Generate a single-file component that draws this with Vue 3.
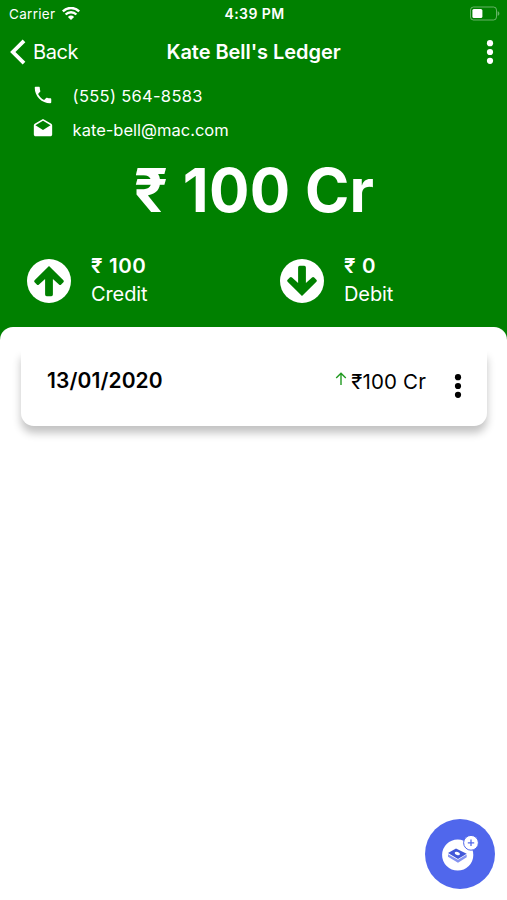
<script setup>
    import { reactive } from 'vue';

    const state = reactive({
        title: "Kate Bell's Ledger",
        phone: '(555) 564-8583',
        email: 'kate-bell@mac.com',
        balance: '₹ 100 Cr',
        credit: '₹ 100',
        debit: '₹ 0',
        entries: [
            {id: 1, date: '13/01/2020', amount: '₹100 Cr'}
        ]
    });
</script>

<template>
    <div class="main">
        <div class="status">
            <div class="carrier">
                <span>Carrier</span>
                <svg width="18" height="14" viewBox="0 0 18 14">
                    <path d="M0.8 4.3a11.8 11.8 0 0 1 16.4 0" />
                    <path d="M3.6 7.5a7.7 7.7 0 0 1 10.8 0" />
                    <path class="solid" d="M9 13.1L5.9 9.9a4.7 4.7 0 0 1 6.2 0z" />
                </svg>
            </div>
            <div class="clock">4:39 PM</div>
            <div class="battery">
                <svg width="31" height="15" viewBox="0 0 31 15">
                    <rect class="shell" x="1.5" y="1" width="26" height="13" rx="3" />
                    <rect class="level" x="3.4" y="3" width="10" height="9" rx="1.5" />
                    <path class="cap" d="M28.6 5.2c2.4 0.7 2.4 3.9 0 4.6z" />
                </svg>
            </div>
        </div>

        <div class="nav">
            <button type="button" class="back">
                <svg width="16" height="26" viewBox="0 0 16 26">
                    <path d="M14 1.8L2.8 13L14 24.2" />
                </svg>
                <span>Back</span>
            </button>
            <h1>{{ state.title }}</h1>
            <button type="button" class="more">
                <svg width="8" height="26" viewBox="0 0 8 26">
                    <circle cx="4" cy="4.2" r="3.1" />
                    <circle cx="4" cy="13" r="3.1" />
                    <circle cx="4" cy="21.8" r="3.1" />
                </svg>
            </button>
        </div>

        <div class="contacts">
            <div class="contact">
                <svg width="22" height="22" viewBox="0 0 24 24">
                    <path d="M6.62 10.79c1.44 2.83 3.76 5.14 6.59 6.59l2.2-2.2c.27-.27.67-.36 1.02-.24 1.12.37 2.33.57 3.57.57.55 0 1 .45 1 1V20c0 .55-.45 1-1 1-9.39 0-17-7.61-17-17 0-.55.45-1 1-1h3.5c.55 0 1 .45 1 1 0 1.25.2 2.45.57 3.57.11.35.03.74-.25 1.02l-2.2 2.2z" />
                </svg>
                <span class="phone">{{ state.phone }}</span>
            </div>
            <div class="contact">
                <svg width="22" height="22" viewBox="0 0 24 24">
                    <path d="M21.99 8c0-.72-.37-1.35-.94-1.7L12 1 2.95 6.3C2.38 6.65 2 7.28 2 8v10c0 1.1.9 2 2 2h16c1.1 0 2-.9 2-2l-.01-10zM12 13L3.74 7.84 12 3l8.26 4.84L12 13z" />
                </svg>
                <span class="email">{{ state.email }}</span>
            </div>
        </div>

        <div class="balance"><span>{{ state.balance }}</span></div>

        <div class="totals">
            <div class="total">
                <svg width="44" height="44" viewBox="0 0 44 44">
                    <circle cx="22" cy="22" r="22" />
                    <path d="M22 7L36.4 21.2a1.4 1.4 0 0 1 0 2L34.2 25.6a1.6 1.6 0 0 1-2.2 0L25.9 20V35.6a1.6 1.6 0 0 1-1.6 1.6h-4.6A1.6 1.6 0 0 1 18.1 35.6V20L12 25.6a1.6 1.6 0 0 1-2.2 0L7.6 23.2a1.4 1.4 0 0 1 0-2z" />
                </svg>
                <div class="figures">
                    <strong>{{ state.credit }}</strong>
                    <span>Credit</span>
                </div>
            </div>
            <div class="total">
                <svg width="44" height="44" viewBox="0 0 44 44">
                    <circle cx="22" cy="22" r="22" />
                    <path transform="rotate(180 22 22)" d="M22 7L36.4 21.2a1.4 1.4 0 0 1 0 2L34.2 25.6a1.6 1.6 0 0 1-2.2 0L25.9 20V35.6a1.6 1.6 0 0 1-1.6 1.6h-4.6A1.6 1.6 0 0 1 18.1 35.6V20L12 25.6a1.6 1.6 0 0 1-2.2 0L7.6 23.2a1.4 1.4 0 0 1 0-2z" />
                </svg>
                <div class="figures">
                    <strong>{{ state.debit }}</strong>
                    <span>Debit</span>
                </div>
            </div>
        </div>

        <div class="sheet">
            <div class="list">
                <div class="entry" v-for="entry in state.entries" :key="entry.id">
                    <span class="date">{{ entry.date }}</span>
                    <svg class="arrow" width="12" height="14" viewBox="0 0 12 14">
                        <path d="M6 13V1.5M1.2 6L6 1.3L10.8 6" />
                    </svg>
                    <span class="amount">{{ entry.amount }}</span>
                    <svg class="dots" width="8" height="26" viewBox="0 0 8 26">
                        <circle cx="4" cy="4.2" r="3.1" />
                        <circle cx="4" cy="13" r="3.1" />
                        <circle cx="4" cy="21.8" r="3.1" />
                    </svg>
                </div>
            </div>
        </div>

        <button type="button" class="add">
            <svg width="70" height="70" viewBox="0 0 70 70">
                <circle class="paper" cx="32.7" cy="36" r="15.6" />
                <circle class="badge" cx="46" cy="23.8" r="7.4" />
                <path class="plus" d="M46 20.6v6.4M42.8 23.8h6.4" />
                <path class="stack" d="M23 35.2v2.6l10 6 8.7-5.6v-2.8l-8.7 5.4z" />
                <path class="note" d="M23 33.9l8-4.3 10.7 5.1-8.7 5.4z" />
                <ellipse class="coin" cx="32.3" cy="34.5" rx="2.7" ry="1.6" transform="rotate(15 32.3 34.5)" />
            </svg>
        </button>
    </div>
</template>

<style>
    body{
        background: #FFFFFF;
    }
</style>

<style scoped>
    div.main{
        position: relative;
        box-sizing: border-box;
        width: 100%;
        height: 900px;
        overflow: hidden;
        background: #008000;
        color: #FFFFFF;
        font-family: Inter, "Liberation Sans", sans-serif;

        display: flex;
        flex-direction: column;
    }
    svg{
        display: block;
        flex: none;
    }
    button{
        padding: 0;
        border: none;
        background: none;
        color: inherit;
        font-family: inherit;
    }
    div.status{
        height: 27px;
        padding: 0 7px 0 9px;
        font-size: 13.5px;

        display: grid;
        grid-template-columns: 1fr auto 1fr;
        align-items: center;
    }
    div.carrier{
        display: flex;
        align-items: center;
        gap: 7px;
    }
    div.carrier span{
        letter-spacing: 0.3px;
    }
    div.carrier path{
        fill: none;
        stroke: #FFFFFF;
        stroke-width: 2.4;
    }
    div.carrier path.solid{
        fill: #FFFFFF;
        stroke: none;
    }
    div.clock{
        font-size: 14px;
        font-weight: 600;
        letter-spacing: 0.4px;
    }
    div.battery{
        justify-self: end;
    }
    div.battery rect.shell{
        fill: none;
        stroke: #FFFFFF;
        stroke-opacity: 0.4;
    }
    div.battery rect.level{
        fill: #FFFFFF;
    }
    div.battery path.cap{
        fill: #FFFFFF;
        fill-opacity: 0.4;
    }
    div.nav{
        height: 50px;
        padding: 0 10px;

        display: grid;
        grid-template-columns: 1fr auto 1fr;
        align-items: center;
    }
    button.back{
        display: flex;
        align-items: center;
        gap: 7px;
        font-size: 20px;
        letter-spacing: -0.4px;
    }
    button.back path{
        fill: none;
        stroke: #FFFFFF;
        stroke-width: 3.8;
    }
    h1{
        margin: 0;
        font-size: 20px;
        font-weight: 600;
        letter-spacing: -0.05px;
    }
    button.more{
        justify-self: end;
        margin-right: 3px;
        fill: #FFFFFF;
    }
    div.contacts{
        padding: 2px 32px 0;
    }
    div.contact{
        height: 34px;
        font-size: 16.5px;

        display: flex;
        align-items: center;
        gap: 18.6px;
    }
    div.contact svg{
        margin-bottom: 2px;
        fill: #FFFFFF;
    }
    span.phone{
        letter-spacing: 0.3px;
    }
    div.balance{
        height: 86px;
        padding-left: 1px;
        font-size: 60px;
        font-weight: 700;
        line-height: 87px;
        letter-spacing: 0.3px;
        text-align: center;
    }
    div.totals{
        height: 94px;
        padding: 20px 0 0 27px;
        box-sizing: border-box;

        display: grid;
        grid-template-columns: 253px 1fr;
    }
    div.total{
        height: 56px;
        display: flex;
        align-items: center;
        gap: 20px;
    }
    div.total circle{
        fill: #FFFFFF;
    }
    div.total path{
        fill: #008000;
    }
    div.figures{
        margin-bottom: 2px;
        display: flex;
        flex-direction: column;
        font-size: 20px;
        line-height: 28px;
        letter-spacing: -0.1px;
    }
    div.figures strong{
        font-size: 20.5px;
        font-weight: 600;
        letter-spacing: 0.6px;
    }
    div.sheet{
        flex: 1;
        padding: 24px 0 0;
        border-radius: 13px 13px 0 0;
        background: #FFFFFF;
        color: #000000;
    }
    div.list{
        padding: 0 20px 20px 21px;
        overflow: hidden;
    }
    div.entry{
        height: 75px;
        padding: 0 25px 17px 26px;
        box-sizing: border-box;
        border-radius: 0 0 13px 13px;
        background: #FFFFFF;
        box-shadow: 0 7px 8px rgba(0, 0, 0, 0.24);

        display: flex;
        align-items: center;
    }
    span.date{
        flex: 1;
        font-size: 21px;
        font-weight: 600;
        letter-spacing: 0.1px;
    }
    svg.arrow{
        margin: 0 4px 2px 0;
        fill: none;
        stroke: #219A21;
        stroke-width: 1.4;
    }
    span.amount{
        margin: 2px 28px 0 0;
        font-size: 20.5px;
        letter-spacing: 0.15px;
    }
    svg.dots{
        margin-top: 11px;
    }
    button.add{
        position: absolute;
        right: 12px;
        bottom: 11px;
        width: 70px;
        height: 70px;
        border-radius: 50%;
        background: #5067EC;
    }
    button.add .paper,
    button.add .badge,
    button.add .coin{
        fill: #FFFFFF;
    }
    button.add .badge{
        stroke: #5067EC;
        stroke-width: 1;
    }
    button.add .plus{
        fill: none;
        stroke: #5067EC;
        stroke-width: 1.3;
    }
    button.add .note{
        fill: #4258D8;
    }
    button.add .stack{
        fill: #8593F0;
    }
</style>
